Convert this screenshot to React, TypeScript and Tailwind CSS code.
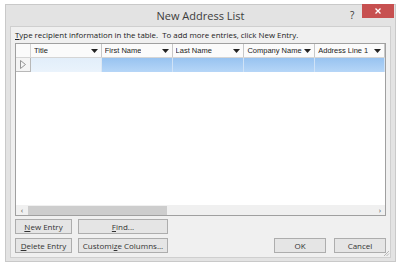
import React from "react"

const columns = [
  { name: "Title", w: "w-[71px]" },
  { name: "First Name", w: "w-[71px]" },
  { name: "Last Name", w: "w-[72px]" },
  { name: "Company Name", w: "w-[71px]" },
  { name: "Address Line 1", w: "w-[70px]" },
]

function DownArrow() {
  return (
    <svg width="7" height="4" viewBox="0 0 7 4" className="shrink-0">
      <path d="M0 0h7L3.5 4z" fill="#222" />
    </svg>
  )
}

function Btn({ children, className }: { children: React.ReactNode; className: string }) {
  return (
    <button
      className={`h-[15px] border border-[#adadad] bg-[#e5e5e5] text-[8px] text-[#333] leading-none flex items-center justify-center ${className}`}
    >
      {children}
    </button>
  )
}

export default function App() {
  return (
    <div
      className="w-[400px] h-[266px] bg-white pl-[5px] pt-[4px] overflow-hidden"
      style={{ fontFamily: '"Open Sans", "Noto Sans", sans-serif' }}
    >
      <div className="w-[391px] h-[258px] bg-[#e3e3e3] border border-[#c9c9c9] flex flex-col">
        {/* Title bar */}
        <div className="h-[21px] flex items-center relative shrink-0">
          <div className="flex-1 text-center text-[11px] text-[#3c3c3c] pt-[1px]">New Address List</div>
          <span className="absolute left-[344px] top-[3px] text-[10px] text-[#333]">?</span>
          <div className="absolute left-[356px] top-[-1px] w-[32px] h-[14px] bg-[#c75050] flex items-center justify-center">
            <svg width="6" height="6" viewBox="0 0 6 6">
              <path d="M0.5 0.5l5 5M5.5 0.5l-5 5" stroke="white" strokeWidth="1.3" />
            </svg>
          </div>
        </div>

        {/* Body */}
        <div className="flex-1 mx-[4px] mb-[3px] bg-[#f0f0f0] border border-[#cfcfcf] flex flex-col px-[4px] pt-[3px] pb-[4px] relative">
          <div className="text-[7.9px] text-[#222] leading-[11px] h-[13px] whitespace-nowrap">
            <span className="underline">T</span>ype recipient information in the table.&nbsp; To add more entries, click New Entry.
          </div>

          {/* Table */}
          <div className="h-[173px] border border-[#a0a0a0] bg-white flex flex-col">
            <div
              className="flex h-[14px] border-b border-[#d5d5d5] bg-[#fbfbfb]"
              style={{ fontFamily: '"Liberation Sans", Arial, sans-serif' }}
            >
              <div className="w-[15px] border-r border-[#d5d5d5]" />
              {columns.map((c) => (
                <div
                  key={c.name}
                  className={`${c.w} border-r border-[#c8c8c8] flex items-center justify-between pl-[3px] pr-[3px] text-[7.5px] text-[#222]`}
                >
                  <span className="truncate">{c.name}</span>
                  <DownArrow />
                </div>
              ))}
              <div className="flex-1 bg-[#f0f0f0]" />
            </div>
            <div className="flex h-[14px]">
              <div className="w-[15px] border-r border-b border-[#b8b8b8] bg-[#f4f4f4] flex items-center justify-center">
                <svg width="6" height="9" viewBox="0 0 6 9">
                  <path d="M0.5 0.5L5.5 4.5L0.5 8.5z" fill="none" stroke="#8a8a8a" strokeWidth="0.9" />
                </svg>
              </div>
              <div className="w-[71px] bg-gradient-to-b from-[#e2eefa] to-[#eaf3fc] border-r border-[#dde8f3]" />
              {columns.slice(1).map((c) => (
                <div
                  key={c.name}
                  className={`${c.w} bg-gradient-to-b from-[#98c3f0] to-[#b6d6f7] border-r border-[#cfe2f6]`}
                />
              ))}
              <div className="flex-1 bg-white" />
            </div>
            <div className="flex-1" />
            {/* Horizontal scrollbar */}
            <div className="h-[10px] bg-[#f0f0f0] flex items-center">
              <span className="w-[12px] text-center text-[8px] text-[#555] leading-none">‹</span>
              <div className="w-[139px] h-[9px] bg-[#cdcdcd]" />
              <div className="flex-1" />
              <span className="w-[10px] text-center text-[8px] text-[#555] leading-none">›</span>
            </div>
          </div>

          {/* Buttons */}
          <div className="flex mt-[3px] items-end">
            <div className="flex flex-col gap-[4px]">
              <div className="flex gap-[6px]">
                <Btn className="w-[57px]">
                  <span className="underline">N</span>ew Entry
                </Btn>
                <Btn className="w-[90px]">
                  <span className="underline">F</span>ind...
                </Btn>
              </div>
              <div className="flex gap-[6px]">
                <Btn className="w-[57px]">
                  <span className="underline">D</span>elete Entry
                </Btn>
                <Btn className="w-[90px]">
                  Customi<span className="underline">z</span>e Columns...
                </Btn>
              </div>
            </div>
            <div className="flex-1" />
            <div className="flex gap-[8px]">
              <Btn className="w-[52px]">OK</Btn>
              <Btn className="w-[52px]">Cancel</Btn>
            </div>
          </div>

          {/* Resize grip */}
          <svg width="7" height="7" viewBox="0 0 7 7" className="absolute right-[0px] bottom-[0px]">
            <path d="M6 1L1 6M6 3.5L3.5 6" stroke="#a8a8a8" strokeWidth="0.8" />
          </svg>
        </div>
      </div>
    </div>
  )
}
